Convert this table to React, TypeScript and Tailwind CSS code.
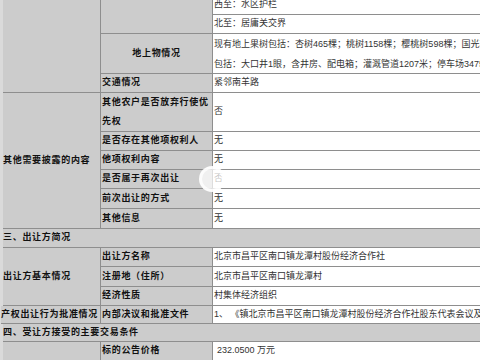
import React from "react";

const line = "border-b border-r border-[#8e8e8e]";
const gray = `bg-[#cccccc] ${line}`;
const white = `bg-white ${line}`;
const lab = "font-bold text-[9px] tracking-[0.7px] text-[#111]";
const val = "text-[9px] text-[#333] whitespace-nowrap";

function L({ r, children, center }: { r: string; children?: React.ReactNode; center?: boolean }) {
  return (
    <div className={`${gray} ${r} col-[2/3] flex items-center ${center ? "justify-center" : "pl-[1px]"} ${lab}`}>
      {children}
    </div>
  );
}

function V({ r, children, cls = "" }: { r: string; children?: React.ReactNode; cls?: string }) {
  return <div className={`${white} ${r} col-[3/4] flex items-center pl-[1px] ${val} ${cls}`}>{children}</div>;
}

export default function App() {
  return (
    <div
      className="relative w-[480px] h-[360px] overflow-hidden bg-white"
      style={{ fontFamily: '"Liberation Sans", "Noto Sans CJK SC", sans-serif' }}
    >
      <div className="border-l-[3px] border-[#dadada] w-[620px] -mt-[4px]">
        <div className="grid grid-cols-[98px_112px_1fr] grid-rows-[19px_19px_40px_19px_39px_19px_19px_19px_20px_20px_19px_19px_20px_19px_18px_18px_19px]">
          {/* block 1 */}
          <div className={`${gray} row-[1/5] col-[1/2]`} />
          <div className={`${gray} row-[1/3] col-[2/3]`} />
          <V r="row-[1/2]">西至：水区护栏</V>
          <V r="row-[2/3]">北至：居庸关交界</V>
          <L r="row-[3/4]" center>地上物情况</L>
          <div className={`${white} row-[3/4] col-[3/4] flex flex-col justify-center pl-[1px] ${val} leading-[20px]`}>
            <span>现有地上果树包括：杏树465棵；桃树1158棵；樱桃树598棵；国光苹果树120棵</span>
            <span>包括：大口井1眼，含井房、配电箱；灌溉管道1207米；停车场3475平方米</span>
          </div>
          <L r="row-[4/5]">交通情况</L>
          <V r="row-[4/5]">紧邻南羊路</V>

          {/* block 2 */}
          <div className={`${gray} row-[5/11] col-[1/2] flex items-center pl-[0px] ${lab}`}>其他需要披露的内容</div>
          <div className={`${gray} row-[5/6] col-[2/3] flex flex-col justify-center pl-[1px] leading-[19px] ${lab}`}>
            <span>其他农户是否放弃行使优</span>
            <span>先权</span>
          </div>
          <V r="row-[5/6]">否</V>
          <L r="row-[6/7]">是否存在其他项权利人</L>
          <V r="row-[6/7]">无</V>
          <L r="row-[7/8]">他项权利内容</L>
          <V r="row-[7/8]">无</V>
          <L r="row-[8/9]">是否属于再次出让</L>
          <V r="row-[8/9]">否</V>
          <L r="row-[9/10]">前次出让的方式</L>
          <V r="row-[9/10]">无</V>
          <L r="row-[10/11]">其他信息</L>
          <V r="row-[10/11]">无</V>

          {/* section 3 */}
          <div className={`${gray} row-[11/12] col-[1/4] flex items-center ${lab}`}>三、出让方简况</div>
          <div className={`${gray} row-[12/15] col-[1/2] flex items-center ${lab}`}>出让方基本情况</div>
          <L r="row-[12/13]">出让方名称</L>
          <V r="row-[12/13]">北京市昌平区南口镇龙潭村股份经济合作社</V>
          <L r="row-[13/14]">注册地（住所）</L>
          <V r="row-[13/14]">北京市昌平区南口镇龙潭村</V>
          <L r="row-[14/15]">经济性质</L>
          <V r="row-[14/15]">村集体经济组织</V>
          <div className={`${gray} row-[15/16] col-[1/2] flex items-center -ml-[2px] ${lab} tracking-[0.3px]`}>产权出让行为批准情况</div>
          <L r="row-[15/16]">内部决议和批准文件</L>
          <V r="row-[15/16]">1、 《镇北京市昌平区南口镇龙潭村股份经济合作社股东代表会议及村民代表会议决议》</V>

          {/* section 4 */}
          <div className={`${gray} row-[16/17] col-[1/4] flex items-center ${lab}`}>四、受让方接受的主要交易条件</div>
          <div className={`${gray} row-[17/18] col-[1/2]`} />
          <L r="row-[17/18]">标的公告价格</L>
          <V r="row-[17/18]" cls="pl-[4px]">232.0500 万元</V>
        </div>
      </div>

      {/* faint watermark */}
      <div className="absolute left-[199px] top-[166px] w-[26px] h-[26px] rounded-full bg-white/70 border-[3px] border-white/80" />
    </div>
  );
}
